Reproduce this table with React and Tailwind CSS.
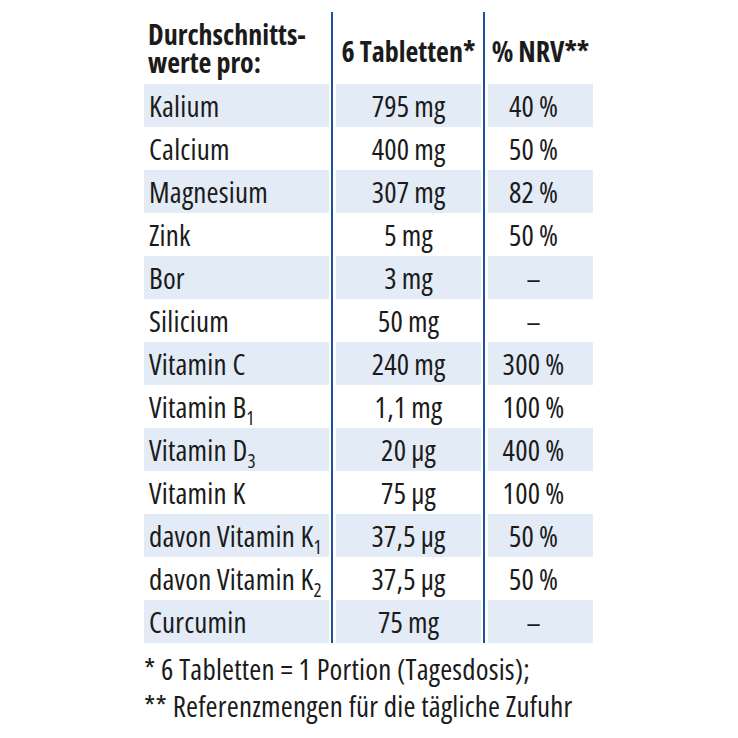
import React from "react";

const T = "\u2009";

const rows = [
  ["Kalium", `795${T}mg`, `40${T}%`],
  ["Calcium", `400${T}mg`, `50${T}%`],
  ["Magnesium", `307${T}mg`, `82${T}%`],
  ["Zink", `5${T}mg`, `50${T}%`],
  ["Bor", `3${T}mg`, "–"],
  ["Silicium", `50${T}mg`, "–"],
  ["Vitamin C", `240${T}mg`, `300${T}%`],
  [["Vitamin B", "1"], `1,1${T}mg`, `100${T}%`],
  [["Vitamin D", "3"], `20${T}µg`, `400${T}%`],
  ["Vitamin K", `75${T}µg`, `100${T}%`],
  [["davon Vitamin K", "1"], `37,5${T}µg`, `50${T}%`],
  [["davon Vitamin K", "2"], `37,5${T}µg`, `50${T}%`],
  ["Curcumin", `75${T}mg`, "–"],
];

function Name({ v }) {
  if (Array.isArray(v)) {
    return (
      <span className="whitespace-nowrap">
        {v[0]}
        <span className="text-[19px] relative top-[7px]">{v[1]}</span>
      </span>
    );
  }
  return <span className="whitespace-nowrap">{v}</span>;
}

function Divider() {
  return (
    <div className="w-[7px] shrink-0 self-stretch bg-white pl-[2px]">
      <div className="w-[2px] h-full bg-[#21509a]" />
    </div>
  );
}

export default function App() {
  return (
    <div className="w-[738px] h-[738px] bg-white text-[#1b1b1b] pt-[12px] pl-[144px] font-['Open_Sans',sans-serif] font-stretch-condensed">
      <div className="w-[449px] flex flex-col">
        <div className="flex h-[72px] text-[28px] font-bold">
          <div className="w-[185px] shrink-0 pl-[4px] pt-[8px] leading-[28px] whitespace-nowrap">
            Durchschnitts-
            <br />
            werte pro:
          </div>
          <Divider />
          <div className="w-[145px] shrink-0 flex items-center justify-center pt-[6px] whitespace-nowrap">6 Tabletten*</div>
          <Divider />
          <div className="w-[105px] shrink-0 flex items-center justify-center pt-[6px] whitespace-nowrap">% NRV**</div>
        </div>
        {rows.map((r, i) => {
          const bg = i % 2 === 0 ? "bg-[#e3ebf7]" : "bg-white";
          return (
            <div key={i} className="flex h-[43px] text-[29px] leading-none tracking-[0.2px]">
              <div className={`w-[185px] shrink-0 ${bg} flex items-center pl-[5px]`}>
                <Name v={r[0]} />
              </div>
              <Divider />
              <div className={`w-[145px] shrink-0 ${bg} flex items-center justify-center whitespace-nowrap`}>{r[1]}</div>
              <Divider />
              <div className={`w-[105px] shrink-0 ${bg} flex items-center justify-center pr-[14px] whitespace-nowrap`}>{r[2]}</div>
            </div>
          );
        })}
      </div>
      <div className="text-[29px] leading-[37px] mt-[7px] tracking-[0.2px] whitespace-nowrap">
        <div>* 6 Tabletten = 1 Portion (Tagesdosis);</div>
        <div>** Referenzmengen für die tägliche Zufuhr</div>
      </div>
    </div>
  );
}
